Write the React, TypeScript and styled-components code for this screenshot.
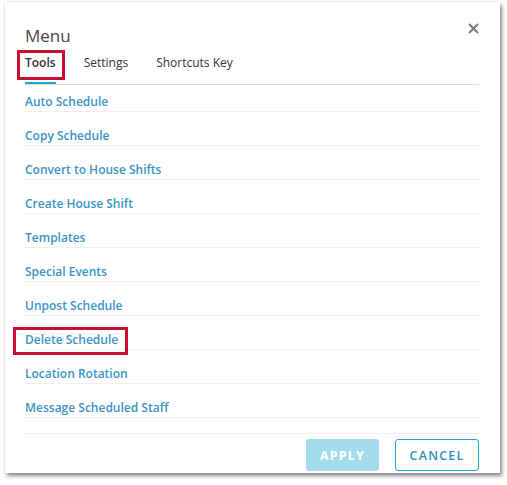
import React, { useState } from "react";
import styled, { createGlobalStyle } from "styled-components";

const Global = createGlobalStyle`
  html, body { margin: 0; padding: 0; background: #ffffff; }
  body { font-family: "Open Sans", "Liberation Sans", sans-serif; }
  * { box-sizing: border-box; }
`;

const Page = styled.div`
  width: 507px;
  height: 485px;
  padding: 2px 7px 12px 5px;
`;

const Dialog = styled.div`
  width: 495px;
  height: 471px;
  background: #fff;
  box-shadow: 2px 3px 4px rgba(0, 0, 0, 0.45), 0 0 2px rgba(0, 0, 0, 0.15);
  padding: 22px 21px 0 20px;
  display: flex;
  flex-direction: column;
  position: relative;
`;

const Title = styled.h2`
  margin: 0;
  font-size: 17px;
  font-weight: 400;
  color: #4f4646;
  line-height: 24px;
`;

const Close = styled.button`
  position: absolute;
  top: 21px;
  right: 21px;
  width: 11px;
  height: 11px;
  padding: 0;
  border: 0;
  background: none;
  display: flex;
  align-items: center;
  justify-content: center;
  cursor: pointer;
`;

const Tabs = styled.div`
  display: flex;
  border-bottom: 1px solid #dcdcdc;
  height: 34px;
  margin-top: 3px;
`;

const Tab = styled.button<{ $active?: boolean }>`
  font-family: inherit;
  font-size: 12px;
  font-weight: ${(p) => (p.$active ? 600 : 400)};
  color: #333;
  background: none;
  border: 0;
  padding: 3px 0 0;
  margin-right: 28px;
  height: 33px;
  line-height: 18px;
  display: flex;
  align-items: flex-start;
  position: relative;
  cursor: pointer;
  &::after {
    content: "";
    position: absolute;
    left: 0;
    right: 0;
    bottom: 0;
    height: 2px;
    background: ${(p) => (p.$active ? "#1ea5d6" : "transparent")};
  }
`;

const Highlight = styled.span`
  position: absolute;
  border: 3px solid #c8102e;
  pointer-events: none;
`;

const List = styled.ul`
  list-style: none;
  margin: 0;
  padding: 0;
`;

const Item = styled.li`
  height: 34px;
  border-bottom: 1px solid #efefef;
  display: flex;
  align-items: flex-end;
  padding-bottom: 1px;
  position: relative;
  &:first-child {
    height: 27px;
  }
`;

const ItemLink = styled.a`
  font-size: 12px;
  font-weight: 600;
  color: #3a94c5;
  text-decoration: none;
  line-height: 17px;
  cursor: pointer;
`;

const Spacer = styled.li`
  height: 16px;
  border-bottom: 1px solid #efefef;
`;

const Footer = styled.div`
  display: flex;
  justify-content: flex-end;
  gap: 16px;
  margin-top: 5px;
`;

const Button = styled.button<{ $variant: "primary" | "outline" }>`
  height: 32px;
  font-family: inherit;
  font-size: 12.5px;
  letter-spacing: 1.2px;
  border-radius: 3px;
  cursor: pointer;
  ${(p) =>
    p.$variant === "primary"
      ? `width: 73px; background: #a3dbee; color: #ffffff; border: 0; font-weight: 700;`
      : `width: 84px; background: #fff; color: #2d8fc0; border: 1px solid #1ea5d6; font-weight: 600;`}
`;

const items = [
  "Auto Schedule",
  "Copy Schedule",
  "Convert to House Shifts",
  "Create House Shift",
  "Templates",
  "Special Events",
  "Unpost Schedule",
  "Delete Schedule",
  "Location Rotation",
  "Message Scheduled Staff",
];

export default function App() {
  const [tab, setTab] = useState("Tools");
  return (
    <>
      <Global />
      <Page>
        <Dialog>
          <Title>Menu</Title>
          <Close aria-label="Close">
            <svg width="11" height="11" viewBox="0 0 11 11">
              <path d="M1.5 1.5L9.5 9.5M9.5 1.5L1.5 9.5" stroke="#7a7a7a" strokeWidth="2" strokeLinecap="round" />
            </svg>
          </Close>
          <Tabs>
            {["Tools", "Settings", "Shortcuts Key"].map((t) => (
              <Tab key={t} $active={tab === t} onClick={() => setTab(t)}>
                {t}
                {t === "Tools" && <Highlight style={{ left: -8, top: -1, width: 48, height: 30 }} />}
              </Tab>
            ))}
          </Tabs>
          <List>
            {items.map((it) => (
              <Item key={it}>
                <ItemLink>{it}</ItemLink>
                {it === "Delete Schedule" && (
                  <Highlight style={{ left: -12, top: 11, width: 115, height: 28 }} />
                )}
              </Item>
            ))}
            <Spacer />
          </List>
          <Footer>
            <Button $variant="primary">APPLY</Button>
            <Button $variant="outline">CANCEL</Button>
          </Footer>
        </Dialog>
      </Page>
    </>
  );
}
